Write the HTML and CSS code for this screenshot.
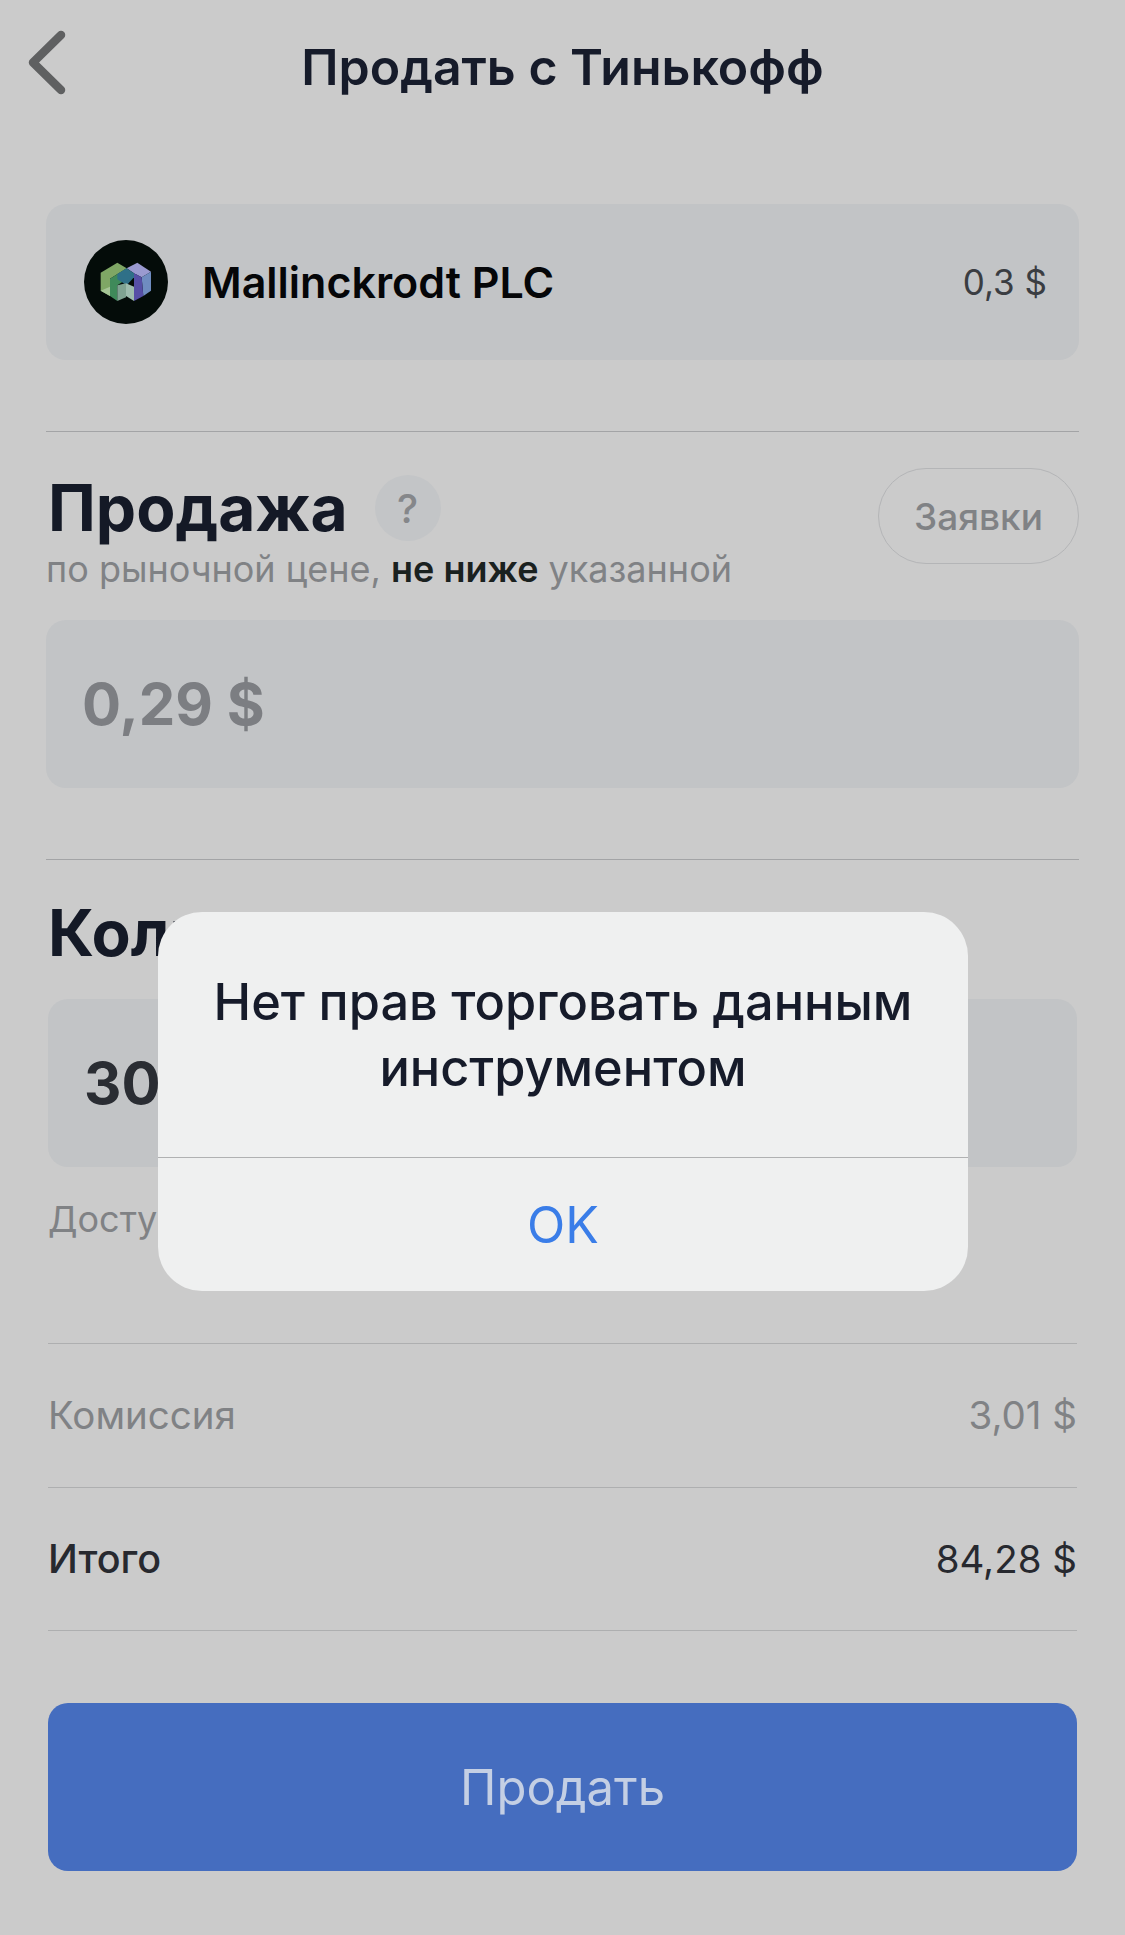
FILE: index.html
```html
<!DOCTYPE html>
<html lang="ru">

<head>
    <meta charset="UTF-8">
    <meta name="viewport" content="width=device-width, initial-scale=1.0">
    <title>Продать с Тинькофф</title>
    <link rel="stylesheet" href="styles.css">
</head>

<body>
    <div class="screen">
        <header class="topbar">
            <svg class="back" width="46" height="72" viewBox="0 0 46 72">
                <path d="M36 6 L8 33.500 L36 61" fill="none" stroke="#5f6061" stroke-width="8.500" stroke-linecap="round" stroke-linejoin="round" />
            </svg>
            <h1>Продать с Тинькофф</h1>
        </header>

        <div class="wide">
            <div class="company">
                <svg class="logo" width="84" height="84" viewBox="72 60 252 252">
                    <circle cx="198" cy="186" r="126" fill="#040c09" />
                    <polygon points="122,158 172,128 200,145 150,176 150,228 122,212" fill="#7fa765" />
                    <polygon points="122,212 150,200 150,228" fill="#a6c596" />
                    <polygon points="150,176 200,145 200,178 172,196 172,243 150,228" fill="#3f8a5a" />
                    <polygon points="200,145 232,128 273,155 245,172 222,160" fill="#9a9ad0" />
                    <polygon points="245,172 273,155 273,212 250,228" fill="#6f8cc0" />
                    <polygon points="222,160 245,172 250,228 222,243 222,196" fill="#564fa6" />
                    <polygon points="172,162 200,145 222,160 222,172 200,196 172,178" fill="#2f7088" />
                    <polygon points="172,196 198,190 198,232 172,243" fill="#7fa392" />
                    <polygon points="198,190 222,200 222,243 198,228" fill="#9dbcae" />
                </svg>
                <span class="company-name">Mallinckrodt PLC</span>
                <span class="company-price">0,3 $</span>
            </div>

            <div class="line line-first"></div>

            <div class="sell-head">
                <div>
                    <div class="title-row">
                        <h2>Продажа</h2>
                        <span class="hint">?</span>
                    </div>
                    <p class="sub">по рыночной цене, <b>не ниже</b> указанной</p>
                </div>
                <button class="orders">Заявки</button>
            </div>

            <div class="field field-price">0,29 $</div>

            <div class="line line-second"></div>
        </div>

        <div class="narrow">
            <h2 class="qty-title">Количество</h2>
            <div class="field field-qty">301</div>
            <p class="avail">Доступно</p>

            <div class="rows">
                <div class="row row-muted"><span>Комиссия</span><span>3,01 $</span></div>
                <div class="row row-total"><span>Итого</span><span>84,28 $</span></div>
            </div>

            <button class="sell">Продать</button>
        </div>

        <div class="alert">
            <div class="alert-text">Нет прав торговать данным инструментом</div>
            <div class="alert-ok">OK</div>
        </div>
    </div>
</body>

</html>
```

FILE: styles.css
```css
* {
    box-sizing: border-box;
}

body {
    margin: 0;
    background-color: #cbcbcb;
    font-family: Inter, "Noto Sans", sans-serif;
}

.screen {
    position: relative;
    width: 1125px;
    height: 1935px;
    overflow: hidden;
}

.topbar {
    display: flex;
    align-items: center;
    justify-content: center;
    position: relative;
    height: 134px;
}

.back {
    position: absolute;
    left: 25px;
    top: 29px;
}

h1 {
    margin: 0;
    font-size: 50px;
    font-weight: 600;
    color: #161b2a;
}

.wide {
    padding: 0 46px;
}

.narrow {
    padding: 0 48px;
}

.company {
    display: flex;
    align-items: center;
    height: 156px;
    margin-top: 70px;
    padding: 0 32px 0 38px;
    background-color: #c2c4c6;
    border-radius: 20px;
}

.logo {
    flex-shrink: 0;
}

.company-name {
    margin-left: 34px;
    font-size: 43px;
    font-weight: 600;
    color: #050608;
}

.company-price {
    margin-left: auto;
    font-size: 35px;
    color: #3a3d42;
}

.line {
    height: 1px;
    background-color: #a3a4a6;
}

.line-first {
    margin-top: 71px;
}

.line-second {
    margin-top: 71px;
}

.sell-head {
    display: flex;
    justify-content: space-between;
    align-items: flex-start;
}

.title-row {
    display: flex;
    align-items: center;
    height: 66px;
    margin-top: 43px;
    padding-left: 2px;
}

h2 {
    margin: 0;
    font-size: 64px;
    font-weight: 700;
    line-height: 66px;
    color: #141926;
}

.hint {
    display: flex;
    align-items: center;
    justify-content: center;
    width: 66px;
    height: 66px;
    margin-left: 27px;
    border-radius: 50%;
    background-color: #c3c5c7;
    font-size: 40px;
    font-weight: 500;
    color: #85878a;
}

.sub {
    margin: 8px 0 0;
    font-size: 36px;
    line-height: 40px;
    color: #808285;
    white-space: nowrap;
}

.sub b {
    font-weight: 600;
    color: #1a211f;
}

.orders {
    width: 201px;
    height: 96px;
    margin-top: 36px;
    padding: 0;
    background: none;
    border: 1px solid #b4b5b7;
    border-radius: 48px;
    font-family: inherit;
    font-size: 37px;
    font-weight: 500;
    color: #808285;
}

.field {
    display: flex;
    align-items: center;
    height: 168px;
    padding-left: 36px;
    background-color: #c2c4c6;
    border-radius: 20px;
    font-size: 58px;
    font-weight: 700;
}

.field-price {
    margin-top: 31px;
    color: #7c7e82;
}

.qty-title {
    margin-top: 40px;
}

.field-qty {
    margin-top: 33px;
    color: #2a2d33;
}

.avail {
    margin: 32px 0 0;
    font-size: 36px;
    line-height: 40px;
    color: #808285;
}

.rows {
    margin-top: 104px;
    border-bottom: 1px solid #aeafb0;
}

.row {
    display: flex;
    align-items: center;
    justify-content: space-between;
    height: 143.500px;
    border-top: 1px solid #aeafb0;
    font-size: 38.500px;
    color: #27292f;
}

.row-muted {
    color: #808285;
}

.row-total span:first-child {
    font-size: 39.500px;
    font-weight: 500;
}

.sell {
    display: block;
    width: 100%;
    height: 168px;
    margin-top: 72px;
    padding: 0;
    border: none;
    border-radius: 20px;
    background-color: #456dbf;
    font-family: inherit;
    font-size: 49px;
    color: #c4cfe4;
}

.alert {
    position: absolute;
    left: 158px;
    top: 912px;
    width: 810px;
    height: 379px;
    background-color: #eff0f0;
    border-radius: 44px;
}

.alert-text {
    display: flex;
    align-items: center;
    justify-content: center;
    height: 246px;
    padding: 0 40px;
    border-bottom: 1px solid #b0b1b2;
    font-size: 50.500px;
    font-weight: 500;
    line-height: 66px;
    text-align: center;
    color: #161b2a;
}

.alert-ok {
    display: flex;
    align-items: center;
    justify-content: center;
    height: 133px;
    font-size: 50px;
    color: #3a7de8;
}
```
